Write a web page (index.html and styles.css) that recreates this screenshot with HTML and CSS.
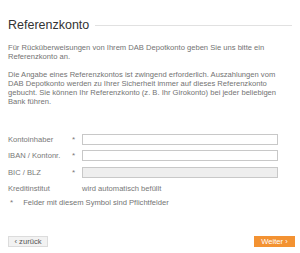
FILE: index.html
```html
<!DOCTYPE html>
<html>
  <head>
    <title>Referenzkonto</title>
    <link rel="stylesheet" href="styles.css">
  </head>

<body>
  <div class = "page">
    <div class = "head-row">
      <p class = "head-t">Referenzkonto</p>
      <div class = "head-line"></div>
    </div>

    <p class = "text">Für Rücküberweisungen von Ihrem DAB Depotkonto geben Sie uns bitte ein<br>Referenzkonto an.</p>

    <p class = "text text-second">Die Angabe eines Referenzkontos ist zwingend erforderlich. Auszahlungen vom<br>DAB Depotkonto werden zu Ihrer Sicherheit immer auf dieses Referenzkonto<br>gebucht. Sie können Ihr Referenzkonto (z. B. Ihr Girokonto) bei jeder beliebigen<br>Bank führen.</p>

    <div class = "form">
      <span class = "label">Kontoinhaber</span>
      <span class = "star">*</span>
      <input class = "field" type = "text">

      <span class = "label">IBAN / Kontonr.</span>
      <span class = "star">*</span>
      <input class = "field" type = "text">

      <span class = "label">BIC / BLZ</span>
      <span class = "star">*</span>
      <input class = "field field-off" type = "text" disabled>

      <span class = "label">Kreditinstitut</span>
      <span class = "star"></span>
      <span class = "auto">wird automatisch befüllt</span>
    </div>

    <p class = "hint"><span class = "star hint-star">*</span>Felder mit diesem Symbol sind Pflichtfelder</p>

    <div class = "buttons">
      <button class = "back-button">&lsaquo; zurück</button>
      <button class = "next-button">Weiter &rsaquo;</button>
    </div>
  </div>
</body>
</html>
```

FILE: styles.css
```css
body {
  margin: 0;
  background-color: white;
  color: rgb(115, 115, 115);
  font-family: "Liberation Sans", Arial, sans-serif;
  font-size: 7.6px;
}

.page {
  padding: 17px 8px 0 8px;
}

.head-row {
  display: flex;
  align-items: center;
}

.head-t {
  margin: 0;
  font-size: 12.5px;
  line-height: 16px;
  color: rgb(51, 51, 51);
}

.head-line {
  flex: 1;
  height: 1px;
  background-color: rgb(225, 225, 225);
  margin-left: 6px;
}

.text {
  margin: 10px 0 0 0;
  line-height: 9px;
}

.text-second {
  margin-top: 9px;
}

.form {
  display: grid;
  grid-template-columns: 64px 10px 196px;
  grid-auto-rows: 16.5px;
  align-items: center;
  margin-top: 25px;
}

.label {
  color: rgb(120, 120, 120);
}

.star {
  color: rgb(120, 120, 120);
  font-size: 8px;
}

.field {
  box-sizing: border-box;
  height: 11px;
  width: 196px;
  margin: 0;
  padding: 0;
  border: 1px solid rgb(200, 200, 200);
  background-color: white;
}

.field-off {
  background-color: rgb(238, 238, 238);
}

.auto {
  color: rgb(120, 120, 120);
}

.hint {
  margin: 1px 0 0 2px;
  line-height: 9px;
}

.hint-star {
  margin-right: 10px;
}

.buttons {
  display: flex;
  justify-content: space-between;
  margin-top: 29px;
}

.back-button {
  box-sizing: border-box;
  width: 40px;
  height: 11px;
  padding: 0;
  border: 1px solid rgb(220, 220, 220);
  background-color: rgb(242, 242, 242);
  color: rgb(85, 85, 85);
  font-family: "Liberation Sans", Arial, sans-serif;
  font-size: 7.6px;
  line-height: 9px;
}

.next-button {
  box-sizing: border-box;
  width: 41px;
  height: 11px;
  padding: 0;
  border: none;
  background-color: rgb(243, 146, 50);
  color: white;
  font-family: "Liberation Sans", Arial, sans-serif;
  font-size: 7.6px;
  line-height: 11px;
  margin-right: -3px;
}
```
